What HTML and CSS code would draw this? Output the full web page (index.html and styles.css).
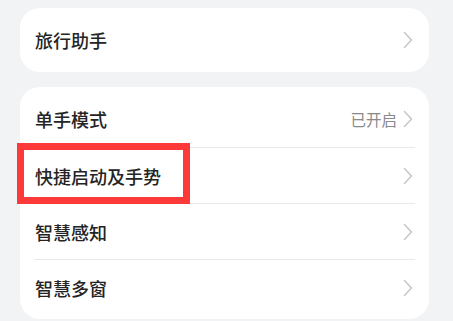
FILE: index.html
```html
<!DOCTYPE html>
<html lang="zh-CN">

<head>
  <meta charset="UTF-8">
  <meta name="viewport" content="width=device-width, initial-scale=1.0">
  <title>设置</title>
  <link rel="stylesheet" href="styles.css">
</head>

<body>
  <div class="page">
    <div class="card">
      <div class="row">
        <span class="label">旅行助手</span>
        <span class="arrow"><svg width="10" height="18" viewBox="0 0 10 18"><path d="M1.5 1.5 L8.5 9 L1.5 16.5" /></svg></span>
      </div>
    </div>

    <div class="card">
      <div class="row">
        <span class="label">单手模式</span>
        <span class="value">已开启</span>
        <span class="arrow"><svg width="10" height="18" viewBox="0 0 10 18"><path d="M1.5 1.5 L8.5 9 L1.5 16.5" /></svg></span>
      </div>
      <div class="row">
        <span class="label">快捷启动及手势</span>
        <span class="arrow"><svg width="10" height="18" viewBox="0 0 10 18"><path d="M1.5 1.5 L8.5 9 L1.5 16.5" /></svg></span>
      </div>
      <div class="row">
        <span class="label">智慧感知</span>
        <span class="arrow"><svg width="10" height="18" viewBox="0 0 10 18"><path d="M1.5 1.5 L8.5 9 L1.5 16.5" /></svg></span>
      </div>
      <div class="row">
        <span class="label">智慧多窗</span>
        <span class="arrow"><svg width="10" height="18" viewBox="0 0 10 18"><path d="M1.5 1.5 L8.5 9 L1.5 16.5" /></svg></span>
      </div>
      <div class="highlight"></div>
    </div>
  </div>
</body>

</html>
```

FILE: styles.css
```css
body {
  font-family: "Noto Sans CJK SC", "Noto Sans", sans-serif;
  margin: 0;
  padding: 0;
  background: #f1f3f5;
  height: 321px;
  overflow: hidden;
}

.page {
  display: flex;
  flex-direction: column;
  gap: 15px;
  padding: 8px 24px 0 20px;
}

.card {
  position: relative;
  background: #ffffff;
  border-radius: 20px;
  padding: 4px 14px;
}

.row {
  display: flex;
  align-items: center;
  height: 56px;
  border-top: 1px solid #e9e9e9;
  box-sizing: border-box;
}

.row:first-child {
  border-top: none;
}

.label {
  flex: 1;
  font-size: 18px;
  font-weight: 500;
  color: #242424;
  padding-left: 1px;
}

.value {
  font-size: 15.5px;
  color: #8a8a8a;
  margin-right: 6px;
}

.arrow {
  display: flex;
  margin-right: 2px;
}

.arrow path {
  fill: none;
  stroke: #c6c6c6;
  stroke-width: 1.5;
  stroke-linecap: round;
  stroke-linejoin: round;
}

.highlight {
  position: absolute;
  left: -3px;
  top: 56px;
  width: 159px;
  height: 47px;
  border: 7px solid #fc3a3a;
}
```
